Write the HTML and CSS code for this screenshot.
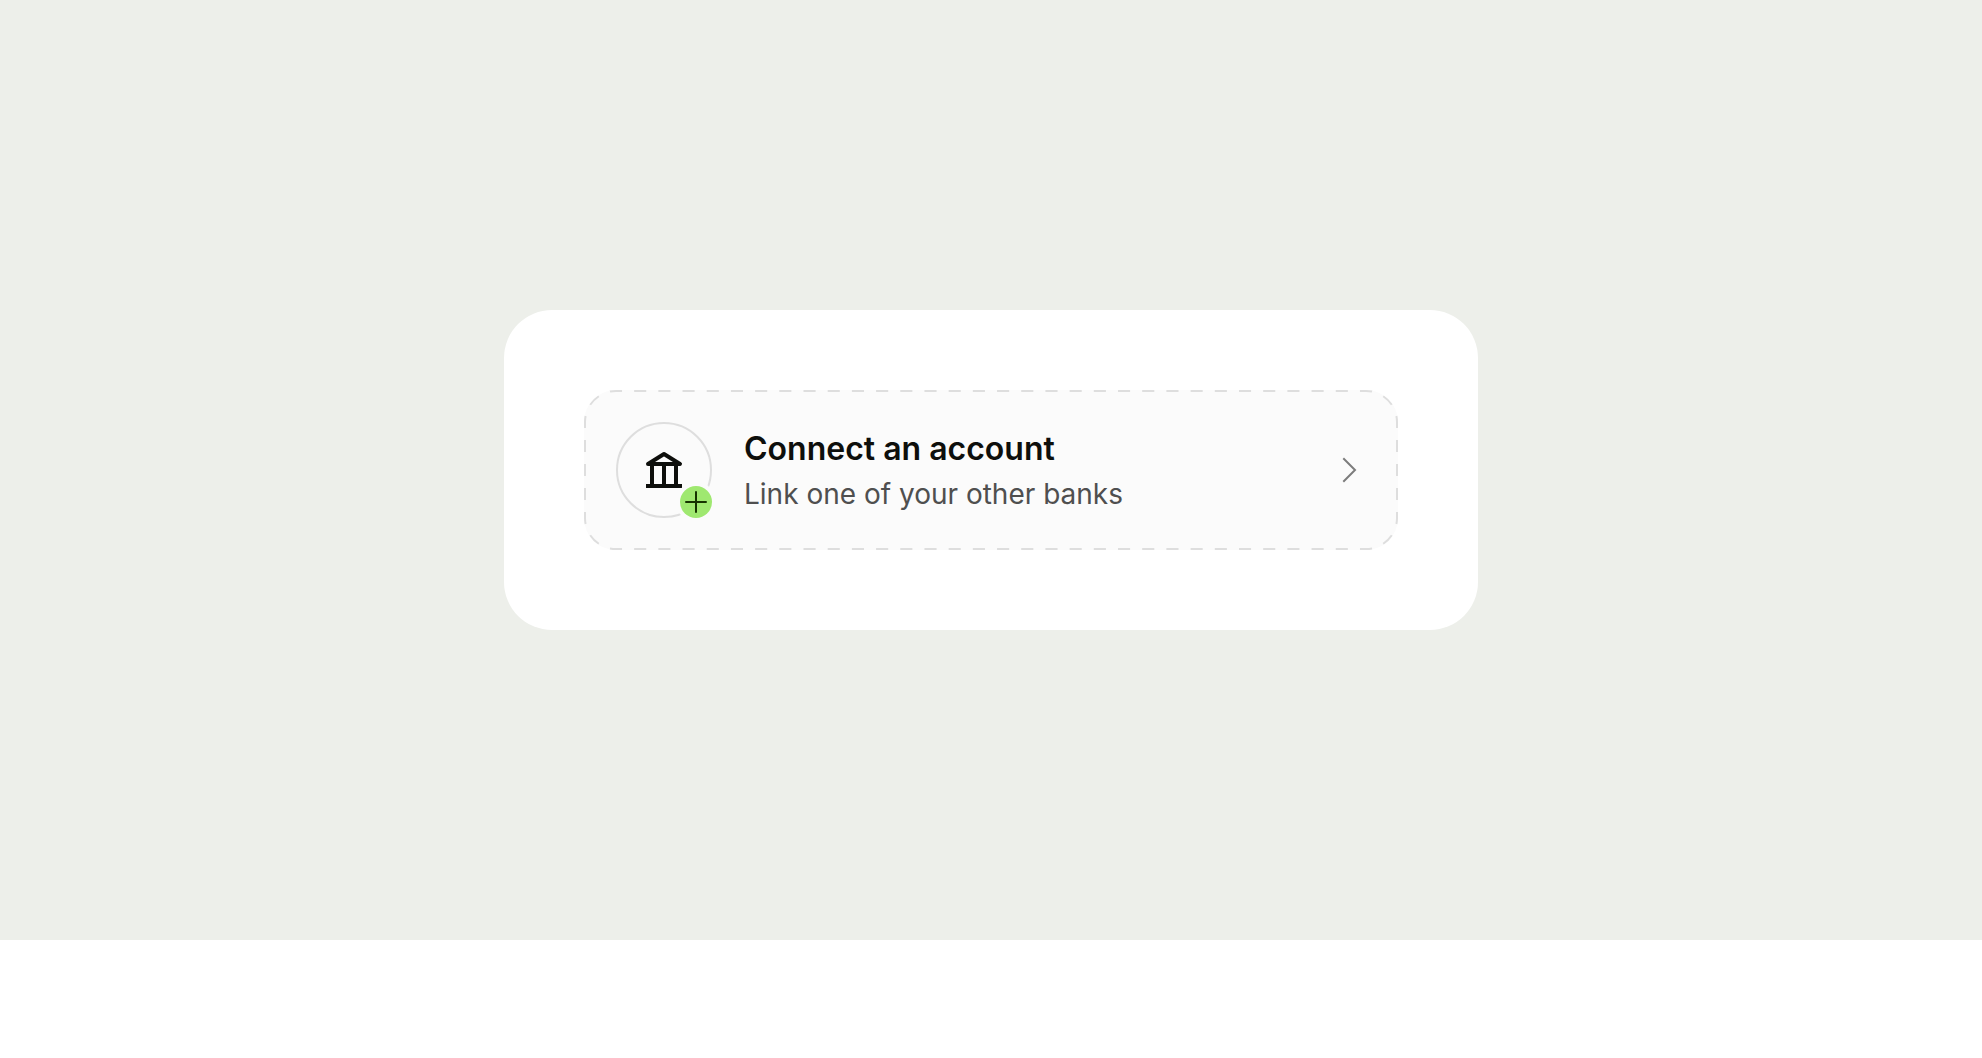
FILE: index.html
```html
<!DOCTYPE html>
<html lang="en">
<head>
  <meta charset="utf-8">
  <title>Connect an account</title>
  <link rel="stylesheet" href="styles.css">
</head>
<body>
  <main class="preview">
    <div class="card">
      <button type="button" class="connect">
        <!-- dashed outline, each side starts and ends on half a dash -->
        <svg class="outline" viewBox="0 0 814 160" preserveAspectRatio="none" aria-hidden="true">
          <path pathLength="744" d="M32 1H782"/>
          <path pathLength="744" d="M32 159H782"/>
          <path pathLength="96" d="M1 32V128"/>
          <path pathLength="96" d="M813 32V128"/>
          <path pathLength="48" d="M1 32A31 31 0 0 1 32 1"/>
          <path pathLength="48" d="M782 1A31 31 0 0 1 813 32"/>
          <path pathLength="48" d="M813 128A31 31 0 0 1 782 159"/>
          <path pathLength="48" d="M32 159A31 31 0 0 1 1 128"/>
        </svg>

        <span class="avatar">
          <svg class="bank" viewBox="0 0 36 36" aria-hidden="true">
            <path d="M2 12L18 2L34 12Z" stroke-linejoin="round"/>
            <path d="M6 12V34M18 12V34M30 12V34M0 34H36"/>
          </svg>
          <span class="badge">
            <svg class="plus" viewBox="0 0 32 32" aria-hidden="true">
              <path d="M16 6V26M6 16H26"/>
            </svg>
          </span>
        </span>

        <span class="text">
          <span class="title">Connect an account</span>
          <span class="subtitle">Link one of your other banks</span>
        </span>

        <svg class="chevron" viewBox="0 0 32 32" aria-hidden="true">
          <path d="M10 5L21 16L10 27"/>
        </svg>
      </button>
    </div>
  </main>
</body>
</html>
```

FILE: styles.css
```css
body {
  margin: 0;
  background-color: #fff;
  font-family: Inter, "Liberation Sans", sans-serif;
  color: #0e0f0c;
}

.preview {
  padding: 310px 24px;
  background-color: #edefea;
}

.card {
  box-sizing: border-box;
  max-width: 974px;
  margin: 0 auto;
  padding: 80px;
  border-radius: 48px;
  background-color: #fff;
}

.connect {
  position: relative;
  display: flex;
  align-items: center;
  gap: 32px;
  width: 100%;
  padding: 32px;
  border: none;
  border-radius: 32px;
  background-color: #fbfbfb;
  font-family: inherit;
  color: inherit;
  text-align: left;
  cursor: pointer;
}

.outline {
  position: absolute;
  inset: 0;
  width: 100%;
  height: 100%;
  fill: none;
  stroke: #dedede;
  stroke-width: 2;
  stroke-dasharray: 12;
  stroke-dashoffset: 6;
}

.avatar {
  position: relative;
  display: flex;
  flex: none;
  align-items: center;
  justify-content: center;
  box-sizing: border-box;
  width: 96px;
  height: 96px;
  border: 2px solid #dedede;
  border-radius: 50%;
}

.bank {
  width: 36px;
  height: 36px;
  overflow: visible;
  fill: none;
  stroke: #0e0f0c;
  stroke-width: 4;
}

.badge {
  position: absolute;
  right: -2px;
  bottom: -2px;
  width: 32px;
  height: 32px;
  border-radius: 50%;
  background-color: #9fe870;
  box-shadow: 0 0 0 4px #fbfbfb;
}

.plus {
  display: block;
  fill: none;
  stroke: #163300;
  stroke-width: 2;
  stroke-linecap: round;
}

.text {
  display: flex;
  flex: 1;
  flex-direction: column;
}

.title {
  font-size: 32px;
  font-weight: 600;
  line-height: 48px;
}

.subtitle {
  font-size: 28px;
  line-height: 42px;
  color: #4f4f4f;
}

.chevron {
  width: 32px;
  height: 32px;
  fill: none;
  stroke: #7c7c7c;
  stroke-width: 2;
  stroke-linecap: square;
}
```
